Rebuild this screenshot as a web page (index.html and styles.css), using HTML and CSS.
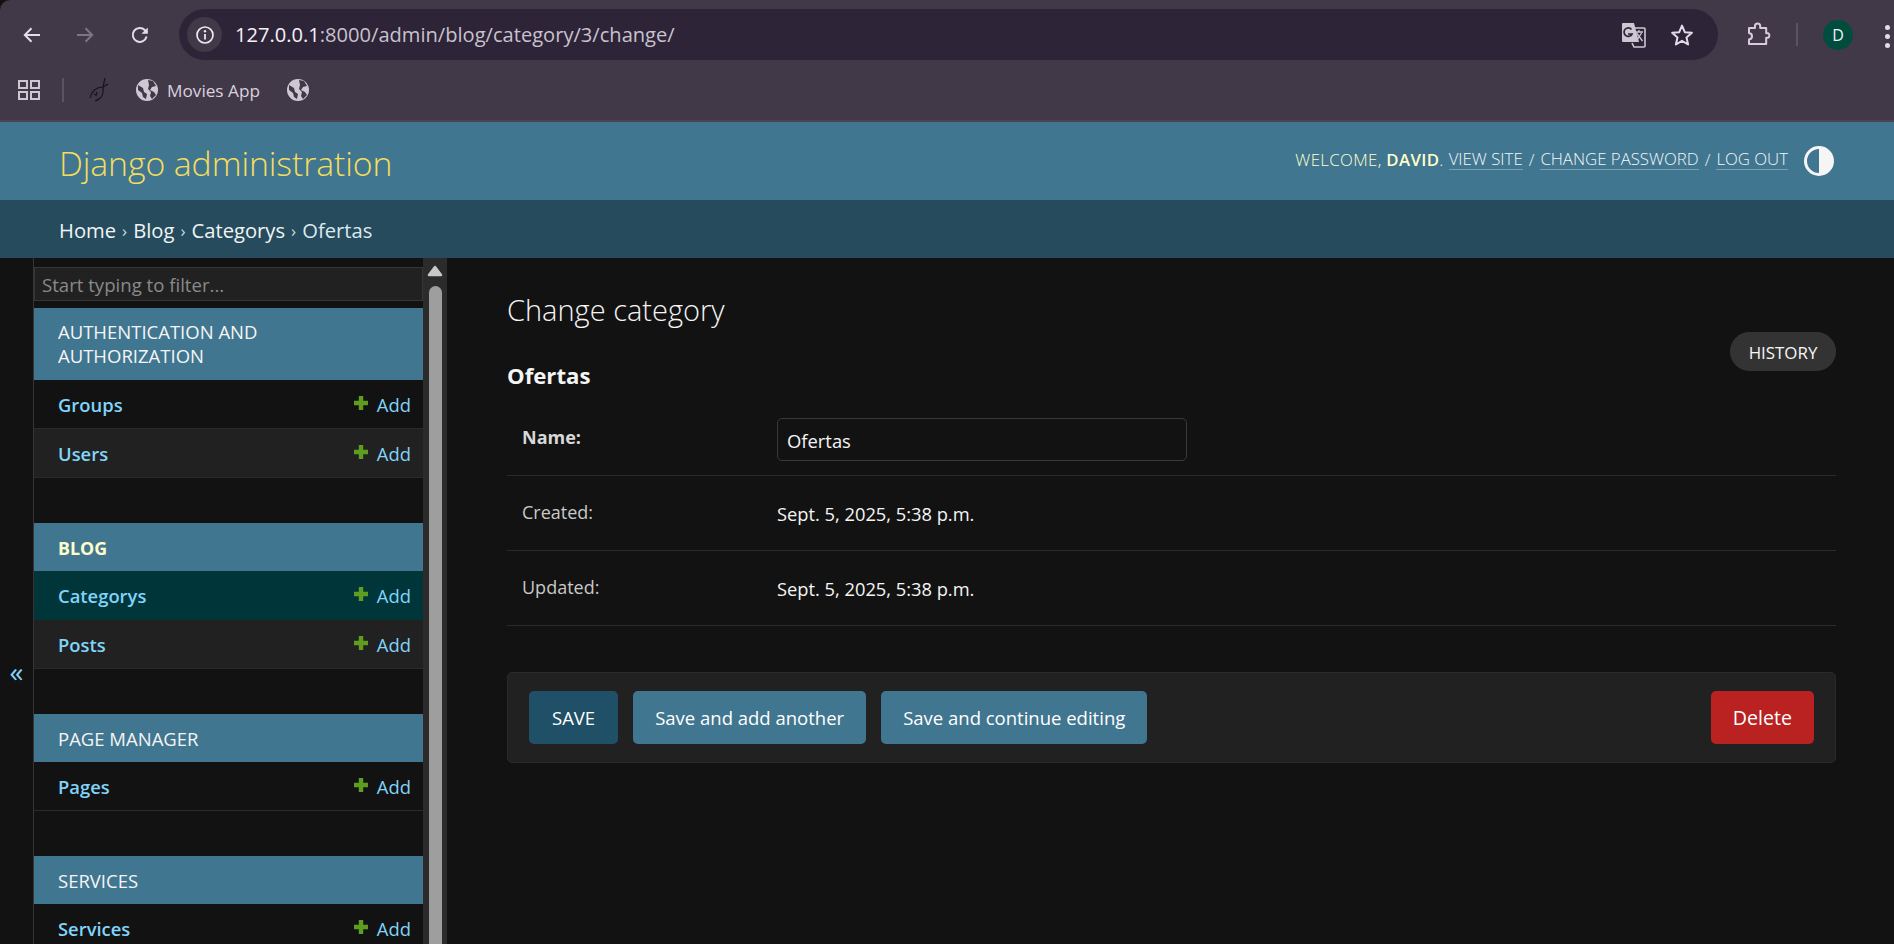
FILE: index.html
```html
<!DOCTYPE html>
<html lang="en">
<head>
<meta charset="utf-8">
<title>Change category | Django site admin</title>
<link rel="stylesheet" href="styles.css">
</head>
<body>
<div class="browser">
  <div class="toolbar">
    <svg class="tb-icon back" width="20" height="20" viewBox="0 0 20 20"><path d="M18 10H3M9.500 3.200 2.800 10l6.700 6.800" fill="none" stroke="#e3dbe8" stroke-width="2"/></svg>
    <svg class="tb-icon forward" width="20" height="20" viewBox="0 0 20 20"><path d="M2 10h15M10.500 3.200l6.700 6.800-6.700 6.800" fill="none" stroke="#7d7485" stroke-width="2"/></svg>
    <svg class="tb-icon reload" width="20" height="20" viewBox="0 0 20 20"><path d="M16.600 11.500A7 7 0 1 1 14.800 5L17 7.200" fill="none" stroke="#e3dbe8" stroke-width="2"/><path d="M17.800 2.400v6.400h-6.400z" fill="#e3dbe8"/></svg>
    <div class="omnibox">
      <span class="info-chip"><svg width="20" height="20" viewBox="0 0 20 20"><circle cx="10" cy="10" r="8" fill="none" stroke="#efe8f2" stroke-width="1.700"/><path d="M10 9v5.500" stroke="#efe8f2" stroke-width="1.800"/><circle cx="10" cy="6.200" r="1.200" fill="#efe8f2"/></svg></span>
      <span class="url"><span class="url-host">127.0.0.1</span>:8000/admin/blog/category/3/change/</span>
      <svg class="translate" width="25" height="26" viewBox="0 0 25 26"><path d="M2 1h11l5 19H2a1 1 0 0 1-1-1V2a1 1 0 0 1 1-1z" fill="#cfc6d4"/><path d="M11 6h12a1 1 0 0 1 1 1v17a1 1 0 0 1-1 1H13l-2-4" fill="none" stroke="#cfc6d4" stroke-width="1.600"/><path d="M10.500 7.500A4.200 4.200 0 1 0 11 12H7" fill="none" stroke="#2d2438" stroke-width="1.700"/><path d="M14 10h8M18 8v2M15.500 19l5-8M15.500 11l6 8" fill="none" stroke="#cfc6d4" stroke-width="1.300"/></svg>
      <svg class="star" width="24" height="24" viewBox="0 0 24 24"><path d="M12 2.600l2.800 6.600 7.100.6-5.400 4.700 1.600 7-6.100-3.700-6.100 3.700 1.600-7-5.400-4.700 7.100-.6z" fill="none" stroke="#e3dbe8" stroke-width="2" stroke-linejoin="round"/></svg>
    </div>
    <svg class="puzzle" width="26" height="24" viewBox="0 0 26 24"><path d="M3 6h6V4a2.600 2.600 0 0 1 5.200 0v2h6v5.200h1.800a2.600 2.600 0 0 1 0 4.600h-1.800V22H3v-4.500c2.200-.3 3-1.600 3-3.200s-.8-3-3-3.300z" fill="none" stroke="#d6cbe0" stroke-width="2" stroke-linejoin="round"/></svg>
    <span class="tb-sep"></span>
    <span class="avatar">D</span>
    <span class="kebab"><i></i><i></i><i></i></span>
  </div>
  <div class="bookmarks">
    <svg class="apps" width="22" height="20" viewBox="0 0 22 20"><path d="M1 1h8v7H1zM13 1h8v7h-8zM1 12h8v7H1zM13 12h8v7h-8z" fill="none" stroke="#cfc8d4" stroke-width="2"/></svg>
    <span class="bm-sep"></span>
    <svg class="favicon" width="22" height="26" viewBox="0 0 22 26"><path d="M17 1l-2 9 5-3M15 10C8 10 3 15 2 21M15 10c1 6-1 12-8 14M6 17l2 1M9 15l-1 4" fill="none" stroke="#17131b" stroke-width="1.200"/></svg>
    <svg class="globe" width="22" height="22" viewBox="0 0 22 22"><circle cx="11" cy="11" r="11" fill="#cfc8d4"/><path d="M2 6l5 3 1 4 3 2-1 5-3-2-1-4-4-3zM12 1l5 1 3 5-4 1-2 3 4 2 2 3-4 4-2-3 1-4-3-3 1-4z" fill="#413848"/></svg>
    <span class="bm-label">Movies App</span>
    <svg class="globe second" width="22" height="22" viewBox="0 0 22 22"><circle cx="11" cy="11" r="11" fill="#cfc8d4"/><path d="M2 6l5 3 1 4 3 2-1 5-3-2-1-4-4-3zM12 1l5 1 3 5-4 1-2 3 4 2 2 3-4 4-2-3 1-4-3-3 1-4z" fill="#413848"/></svg>
  </div>
</div>

<header class="site-header">
  <a class="brand" href="#">Django administration</a>
  <div class="user-tools">
    <span class="welcome">WELCOME, <strong>DAVID</strong>.</span>
    <a href="#">VIEW SITE</a><span class="slash">/</span><a href="#">CHANGE PASSWORD</a><span class="slash">/</span><a href="#">LOG OUT</a>
    <span class="theme-toggle"></span>
  </div>
</header>
<nav class="breadcrumbs"><a href="#">Home</a><span class="crumb-sep">›</span><a href="#">Blog</a><span class="crumb-sep">›</span><a href="#">Categorys</a><span class="crumb-sep">›</span><span class="crumb-current">Ofertas</span></nav>

<div class="workspace">
  <div class="toggle-col"><span class="toggle">«</span></div>
  <aside class="sidebar">
    <div class="filter"><input class="filter-input" type="text" placeholder="Start typing to filter..."></div>
    <section class="module">
      <h2 class="caption">AUTHENTICATION AND<br>AUTHORIZATION</h2>
      <div class="row"><a class="model" href="#">Groups</a><a class="add" href="#"><svg class="plus" width="16" height="16" viewBox="0 0 16 16"><path d="M8 1v14M1 8h14" stroke="#5e9d1f" stroke-width="4.400"/></svg>Add</a></div>
      <div class="row alt"><a class="model" href="#">Users</a><a class="add" href="#"><svg class="plus" width="16" height="16" viewBox="0 0 16 16"><path d="M8 1v14M1 8h14" stroke="#5e9d1f" stroke-width="4.400"/></svg>Add</a></div>
    </section>
    <section class="module">
      <h2 class="caption one current">BLOG</h2>
      <div class="row selected"><a class="model" href="#">Categorys</a><a class="add" href="#"><svg class="plus" width="16" height="16" viewBox="0 0 16 16"><path d="M8 1v14M1 8h14" stroke="#5e9d1f" stroke-width="4.400"/></svg>Add</a></div>
      <div class="row alt"><a class="model" href="#">Posts</a><a class="add" href="#"><svg class="plus" width="16" height="16" viewBox="0 0 16 16"><path d="M8 1v14M1 8h14" stroke="#5e9d1f" stroke-width="4.400"/></svg>Add</a></div>
    </section>
    <section class="module">
      <h2 class="caption one">PAGE MANAGER</h2>
      <div class="row"><a class="model" href="#">Pages</a><a class="add" href="#"><svg class="plus" width="16" height="16" viewBox="0 0 16 16"><path d="M8 1v14M1 8h14" stroke="#5e9d1f" stroke-width="4.400"/></svg>Add</a></div>
    </section>
    <section class="module">
      <h2 class="caption one">SERVICES</h2>
      <div class="row"><a class="model" href="#">Services</a><a class="add" href="#"><svg class="plus" width="16" height="16" viewBox="0 0 16 16"><path d="M8 1v14M1 8h14" stroke="#5e9d1f" stroke-width="4.400"/></svg>Add</a></div>
    </section>
  </aside>
  <div class="scrollbar"><svg class="scroll-up" width="16" height="12" viewBox="0 0 16 12"><path d="M8 2 14 10H2z" fill="#c8c8c8" stroke="#c8c8c8" stroke-width="2.500" stroke-linejoin="round"/></svg><span class="scroll-thumb"></span></div>

  <main class="content">
    <h1 class="page-title">Change category</h1>
    <div class="object-head">
      <h2 class="object-name">Ofertas</h2>
      <a class="history" href="#">HISTORY</a>
    </div>
    <div class="form-row form-row-name">
      <label class="field-label required" for="name">Name:</label>
      <input class="field-input" id="name" type="text" value="Ofertas">
    </div>
    <div class="form-row">
      <span class="field-label">Created:</span>
      <span class="field-value">Sept. 5, 2025, 5:38 p.m.</span>
    </div>
    <div class="form-row">
      <span class="field-label">Updated:</span>
      <span class="field-value">Sept. 5, 2025, 5:38 p.m.</span>
    </div>
    <div class="submit-row">
      <button class="btn btn-default" type="button">SAVE</button>
      <button class="btn" type="button">Save and add another</button>
      <button class="btn" type="button">Save and continue editing</button>
      <a class="btn btn-delete" href="#">Delete</a>
    </div>
  </main>
</div>
</body>
</html>
```
FILE: styles.css
```css
* { box-sizing: border-box; }
html, body { height: 100%; }
body {
  margin: 0;
  height: 944px;
  overflow: hidden;
  display: flex;
  flex-direction: column;
  background: #121212;
  color: #f5f5f5;
  font-family: "Open Sans", "Noto Sans", sans-serif;
  font-size: 18px;
}
a { text-decoration: none; color: inherit; }

/* Browser chrome */
.browser {
  height: 122px;
  flex: none;
  background: #413848;
  border-bottom: 2px solid #4b4252;
  border-top-left-radius: 10px;
  font-family: "Open Sans", sans-serif;
}
.toolbar {
  height: 60px;
  padding-top: 9px;
  display: flex;
  align-items: flex-start;
}
.tb-icon { flex: none; margin-top: 16px; }
.back { margin-left: 22px; }
.forward { margin-left: 33px; }
.reload { margin-left: 35px; }
.omnibox {
  margin-left: 29px;
  width: 1539px;
  height: 51px;
  border-radius: 26px;
  background: #2d2438;
  display: flex;
  align-items: center;
  padding-left: 8px;
  flex: none;
}
.info-chip {
  width: 35px;
  height: 35px;
  border-radius: 50%;
  background: #413848;
  display: flex;
  align-items: center;
  justify-content: center;
  flex: none;
}
.url {
  margin-left: 13px;
  font-size: 20.100px;
  color: #c9c2ce;
  white-space: nowrap;
  flex: 1;
}
.url-host { color: #f6f1f8; }
.translate { flex: none; margin-right: 24px; }
.star { flex: none; margin-right: 24px; }
.puzzle { flex: none; margin-left: 28px; margin-top: 13px; }
.tb-sep { width: 2px; height: 23px; background: #5b5263; margin-left: 24px; margin-top: 14px; flex: none; }
.avatar {
  flex: none;
  width: 30px;
  height: 30px;
  margin-left: 25px;
  margin-top: 11px;
  border-radius: 50%;
  background: #004d40;
  color: #eef5f3;
  font-size: 16px;
  display: flex;
  align-items: center;
  justify-content: center;
}
.kebab { flex: none; margin-left: 32px; margin-top: 16px; display: flex; flex-direction: column; gap: 4px; }
.kebab i { width: 5px; height: 5px; border-radius: 50%; background: #e3dbe8; display: block; }
.bookmarks {
  height: 60px;
  display: flex;
  align-items: center;
}
.apps { margin-left: 18px; flex: none; }
.bm-sep { width: 2px; height: 24px; background: #5b5263; margin-left: 22px; flex: none; }
.favicon { margin-left: 24px; flex: none; }
.globe { margin-left: 26px; flex: none; }
.globe.second { margin-left: 27px; }
.bm-label { margin-left: 9px; font-size: 17.200px; color: #d9d2de; }

/* Django header */
.site-header {
  height: 78px;
  flex: none;
  background: #417690;
  padding: 0 60px 0 59px;
  display: flex;
  align-items: center;
  justify-content: space-between;
}
.brand { font-size: 33.800px; font-weight: 300; color: #f5dd5d; letter-spacing: -0.1px; padding-top: 4px; }
.user-tools {
  display: flex;
  align-items: center;
  font-size: 16.800px;
  font-weight: 300;
  color: #ffc;
}
.welcome { margin-right: 5px; padding-bottom: 4px; letter-spacing: .35px; }
.welcome strong { font-weight: 600; }
.user-tools a { color: #f5f7f8; border-bottom: 1px solid rgba(255,255,255,.3); line-height: 20px; margin-bottom: 4px; }
.slash { margin: 0 6px; color: #e8eef2; padding-bottom: 4px; }
.theme-toggle {
  width: 30px;
  height: 30px;
  margin-left: 16px;
  border-radius: 50%;
  border: 3px solid #f5f5f5;
  background: linear-gradient(90deg, #417690 50%, #f5f5f5 50%);
}
.breadcrumbs {
  height: 58px;
  flex: none;
  background: #264b5d;
  padding: 2px 60px 0 59px;
  display: flex;
  align-items: center;
  font-size: 20.200px;
  color: #c4dce8;
}
.breadcrumbs a { color: #f0f4f6; }
.crumb-sep { margin: 0 6px; font-size: 17px; }
.crumb-current { color: #dbe9f0; }

/* Work area */
.workspace { flex: 1; display: flex; min-height: 0; overflow: hidden; }
.toggle-col {
  width: 33px;
  flex: none;
  padding-top: 146px;
  display: flex;
  align-items: center;
  justify-content: center;
}
.toggle { color: #81d4fa; font-size: 28px; line-height: 1; padding-bottom: 7px; }
.sidebar {
  width: 390px;
  flex: none;
  border-left: 1px solid #353535;
  overflow: hidden;
  padding-top: 9px;
}
.filter { height: 41px; }
.filter-input {
  display: block;
  width: 100%;
  height: 34px;
  background: #212121;
  border: 1px solid #353535;
  color: #eee;
  padding: 0 7px;
  font-family: inherit;
  font-size: 18.600px;
  outline: none;
}
.filter-input::placeholder { color: #8a8a8a; opacity: 1; }
.module { margin-bottom: 45px; }
.caption {
  margin: 0;
  background: #417690;
  color: #f5f5f5;
  font-size: 18.500px;
  font-weight: 400;
  line-height: 24px;
  padding: 12px 24px;
}
.caption.one { padding: 13px 24px 11px; }
.caption.current { font-size: 17.800px; font-weight: 700; color: #ffc; }
.row {
  height: 49px;
  padding: 1px 12px 0 24px;
  display: flex;
  align-items: center;
  justify-content: space-between;
  border-bottom: 1px solid #2a2a2a;
  background: #121212;
  font-size: 18.400px;
}
.row.alt { background: #212121; }
.row.selected { background: #00363a; border-bottom-color: #00363a; }
.model { color: #81d4fa; font-weight: 600; }
.add { color: #81d4fa; display: flex; align-items: center; }
.plus { margin-right: 8px; margin-bottom: 3px; }
.scrollbar {
  width: 24px;
  flex: none;
  background: #2b2b2b;
  margin-right: 60px;
  padding: 7px 4px 0;
  display: flex;
  flex-direction: column;
  align-items: center;
}
.scroll-up { flex: none; }
.scroll-thumb {
  width: 13px;
  flex: 1;
  margin-top: 9px;
  background: #9e9e9e;
  border-radius: 7px 7px 0 0;
}

/* Main */
.content { width: 1329px; flex: none; }
.page-title {
  margin: 0;
  height: 74px;
  padding-top: 32px;
  font-size: 29px;
  line-height: 40px;
  font-weight: 300;
  color: #f5f5f5;
}
.object-head {
  height: 73px;
  display: flex;
  justify-content: space-between;
  align-items: flex-start;
}
.object-name {
  margin: 30px 0 0;
  font-size: 22.200px;
  line-height: 28px;
  font-weight: 700;
  color: #f5f5f5;
}
.history {
  width: 106px;
  height: 39px;
  padding-top: 1px;
  border-radius: 20px;
  background: #333;
  color: #f7f7f7;
  font-size: 16.900px;
  display: flex;
  align-items: center;
  justify-content: center;
}
.form-row {
  height: 75px;
  padding: 0 15px;
  display: grid;
  grid-template-columns: 255px 1fr;
  align-items: center;
  border-bottom: 1px solid #2a2a2a;
  font-size: 18px;
}
.form-row-name { height: 71px; padding-bottom: 1px; }
.field-label { color: #c9c9c9; padding-bottom: 3px; }
.required { font-weight: 700; color: #d8d8d8; padding-bottom: 6px; }
.field-value { color: #f5f5f5; font-size: 18.300px; }
.field-input {
  width: 410px;
  height: 43px;
  background: #121212;
  border: 1px solid #3a3a3a;
  border-radius: 5px;
  padding: 2px 9px 0;
  color: #f5f5f5;
  font-family: inherit;
  font-size: 18.400px;
  outline: none;
}
.submit-row {
  margin-top: 46px;
  height: 91px;
  padding: 0 21px;
  background: #212121;
  border: 1px solid #2a2a2a;
  border-radius: 5px;
  display: flex;
  align-items: center;
  gap: 15px;
}
.btn {
  height: 53px;
  padding: 0 22px;
  border: none;
  border-radius: 5px;
  background: #417690;
  color: #fff;
  font-family: inherit;
  font-size: 18.500px;
  display: flex;
  align-items: center;
}
.btn-default { background: #205067; padding: 0 23px; }
.btn-delete { background: #ba2121; margin-left: auto; font-size: 19.600px; }
```
